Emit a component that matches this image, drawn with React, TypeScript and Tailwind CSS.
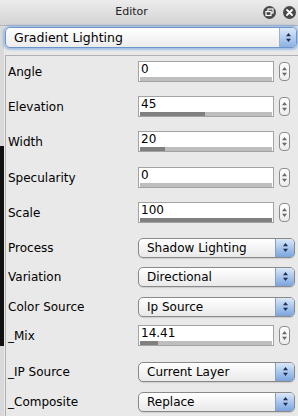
import React from "react";

const font = { fontFamily: '"DejaVu Sans", "Liberation Sans", sans-serif' };

function Arrows({ color = "#1e2f55" }: { color?: string }) {
  return (
    <svg width="7" height="11" viewBox="0 0 7 11">
      <path d="M3.5 1 L6 4.2 L1 4.2 Z" fill={color} />
      <path d="M3.5 10 L6 6.8 L1 6.8 Z" fill={color} />
    </svg>
  );
}

function Spinner() {
  return (
    <div className="w-[11px] h-[19px] rounded-[4px] border border-[#8c8c8c] bg-gradient-to-b from-white to-[#ececec] flex items-center justify-center">
      <Arrows color="#6a6a6a" />
    </div>
  );
}

function NumField({ value, pct }: { value: string; pct: number }) {
  return (
    <div className="flex items-center gap-[5px]">
      <div className="w-[136px] h-[21px] border border-[#a3a3a3] bg-white flex flex-col">
        <div className="flex-1 pl-[2px] text-[12px] leading-[15px] text-black">{value}</div>
        <div className="h-[5px] mx-[1px] bg-[#bebebe] flex">
          <div className="h-full bg-[#808080]" style={{ width: `${pct}%` }} />
        </div>
      </div>
      <Spinner />
    </div>
  );
}

function Select({ value }: { value: string }) {
  return (
    <div className="w-[157px] h-[20px] flex rounded-[5px] border border-[#8a8a8a] overflow-hidden bg-gradient-to-b from-white to-[#e9e9e9] shadow-[0_1px_1px_rgba(0,0,0,0.12)]">
      <span className="flex-1 pl-[8px] text-[12px] leading-[18px] text-black whitespace-nowrap">{value}</span>
      <span className="w-[19px] border-l border-[#8aa0c0] bg-gradient-to-b from-[#dbe8f8] via-[#a9c6ec] to-[#7aa5dd] flex items-center justify-center">
        <Arrows />
      </span>
    </div>
  );
}

function Row({ label, mt, children }: { label: string; mt: number; children: React.ReactNode }) {
  return (
    <div className="h-[21px] flex items-center" style={{ marginTop: mt }}>
      <div className="w-[131px] pl-[1px] text-[12px] text-black whitespace-nowrap">{label}</div>
      {children}
    </div>
  );
}

export default function App() {
  return (
    <div className="w-[298px] h-[416px] bg-[#e9e9e9] flex flex-col overflow-hidden" style={font}>
      <div className="h-[26px] shrink-0 flex items-center bg-gradient-to-b from-[#ececec] to-[#d3d3d3] border-b border-[#b5b5b5]">
        <div className="flex-1 text-center text-[11px] text-[#222]">Editor</div>
        <div className="flex items-center gap-[7px] pr-[2px]">
          <div className="w-[13px] h-[13px] rounded-full bg-[#4a4a4a] flex items-center justify-center">
            <svg width="9" height="9" viewBox="0 0 9 9">
              <rect x="3" y="1" width="5" height="4" fill="none" stroke="white" strokeWidth="1.2" />
              <rect x="1" y="3.5" width="5" height="4" fill="#4a4a4a" stroke="white" strokeWidth="1.2" />
            </svg>
          </div>
          <div className="w-[13px] h-[13px] rounded-full bg-[#4a4a4a] flex items-center justify-center">
            <svg width="9" height="9" viewBox="0 0 9 9">
              <path d="M2 2 L7 7 M7 2 L2 7" stroke="white" strokeWidth="1.8" strokeLinecap="round" />
            </svg>
          </div>
        </div>
      </div>
      <div className="flex-1 flex">
        <div className="w-[4px] shrink-0 flex flex-col">
          <div className="h-[120px] bg-[#d9d9d9]" />
          <div className="h-[200px] bg-[#111]" />
          <div className="flex-1 bg-[#d9d9d9]" />
        </div>
        <div className="flex-1 flex flex-col">
          <div className="pt-[1px] pl-[1px] pr-[1px]">
            <div className="h-[21px] flex rounded-[5px] border border-[#6d95c9] overflow-hidden bg-gradient-to-b from-white to-[#ececec] shadow-[0_0_2px_2px_rgba(110,160,220,0.55)]">
              <span className="flex-1 pl-[8px] text-[12.5px] leading-[19px] text-black">Gradient Lighting</span>
              <span className="w-[17px] border-l border-[#9ab0cf] bg-gradient-to-b from-[#dbe8f8] via-[#b4cdee] to-[#8bb1e2] flex items-center justify-center">
                <Arrows />
              </span>
            </div>
          </div>
          <div className="mt-[7px] ml-[1px] flex-1 border-l border-t border-[#b0b0b0] pl-[1px] pt-[5px]">
            <Row label="Angle" mt={0}><NumField value="0" pct={0} /></Row>
            <Row label="Elevation" mt={14}><NumField value="45" pct={49} /></Row>
            <Row label="Width" mt={14}><NumField value="20" pct={19} /></Row>
            <Row label="Specularity" mt={15}><NumField value="0" pct={0} /></Row>
            <Row label="Scale" mt={14}><NumField value="100" pct={100} /></Row>
            <Row label="Process" mt={14}><Select value="Shadow Lighting" /></Row>
            <Row label="Variation" mt={8}><Select value="Directional" /></Row>
            <Row label="Color Source" mt={9}><Select value="Ip Source" /></Row>
            <Row label="_Mix" mt={8}><NumField value="14.41" pct={14} /></Row>
            <Row label="_IP Source" mt={15}><Select value="Current Layer" /></Row>
            <Row label="_Composite" mt={9}><Select value="Replace" /></Row>
          </div>
        </div>
      </div>
    </div>
  );
}
